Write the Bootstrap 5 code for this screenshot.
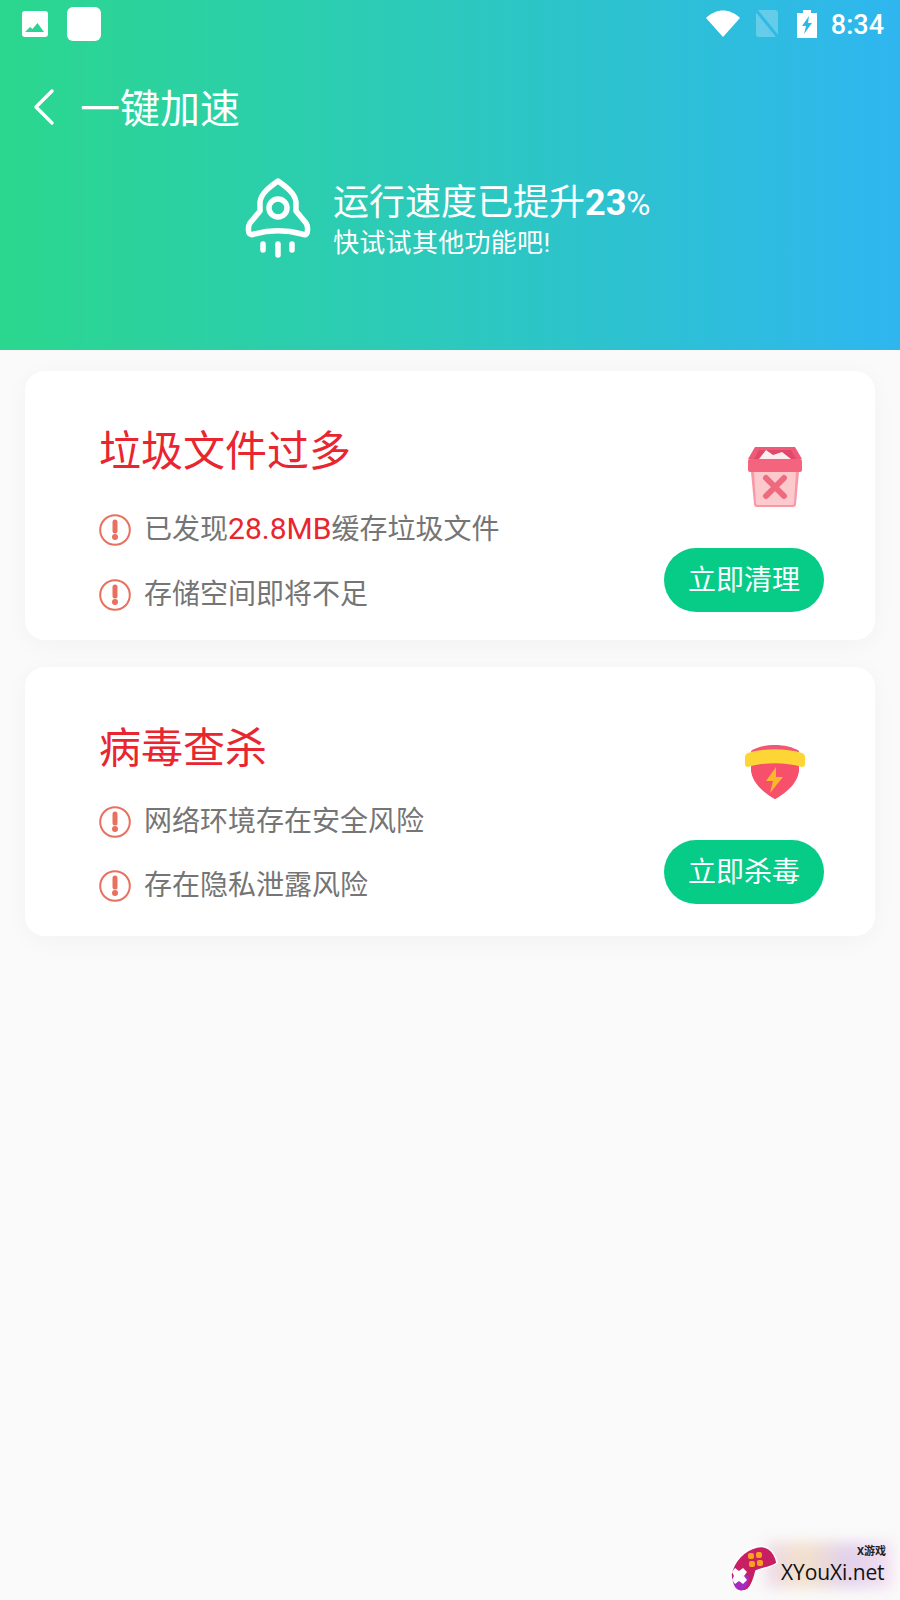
<!DOCTYPE html>
<html lang="zh-CN">
  <head>
    <meta charset="UTF-8" />
    <meta name="viewport" content="width=device-width, initial-scale=1.0" />
    <title>一键加速</title>
    <link rel="stylesheet" href="https://cdn.jsdelivr.net/npm/bootstrap@5.3.0/dist/css/bootstrap.min.css" />
    <style>
      body {
        background-color: #fafafa;
        font-family: Roboto, "Noto Sans CJK SC", sans-serif;
        min-height: 1600px;
        position: relative;
        overflow: hidden;
      }
      .top-area {
        height: 350px;
        background: linear-gradient(90deg, #2bd78e 0%, #2cc9bd 50%, #2fb6f0 100%);
        color: #fff;
      }
      .status-row {
        height: 50px;
        padding: 7px 16px 0 22px;
      }
      .status-image { margin-top: 4px; }
      .status-blank { width: 34px; height: 34px; margin-left: 19px; }
      .status-wifi { margin-top: 3px; }
      .status-sim { margin: 3px 0 0 16px; }
      .status-batt { margin: 3px 0 0 19px; }
      .status-time {
        font-size: 27px;
        font-weight: 500;
        line-height: 36px;
        margin-left: 14px;
      }
      .title-row {
        padding: 30px 0 0 32px;
        height: 110px;
      }
      .title-text {
        font-size: 40px;
        line-height: 60px;
        margin-left: 24px;
      }
      .speed-row {
        margin-top: 17px;
        padding-left: 245px;
      }
      .speed-icon { margin-right: 22px; }
      .speed-text { margin-top: 3px; }
      .speed-main {
        font-size: 36px;
        line-height: 46px;
      }
      .speed-main b { font-weight: 700; }
      .speed-pct { font-size: 33px; }
      .speed-sub {
        font-size: 26px;
        line-height: 32px;
        letter-spacing: 0.3px;
      }
      .cards-area {
        padding: 21px 25px 0;
      }
      .task-card {
        height: 269px;
        margin-bottom: 27px;
        background: #fff;
        border-radius: 20px;
        box-shadow: 0 4px 24px rgba(0, 0, 0, 0.035);
        padding-left: 74px;
        position: relative;
      }
      .task-title {
        color: #e9252f;
        font-size: 42px;
        line-height: 60px;
        margin: 0;
        font-weight: 400;
      }
      .task-line {
        color: #757575;
        font-size: 28px;
        line-height: 40px;
      }
      .task-line em {
        color: #e9252f;
        font-style: normal;
        font-size: 30px;
      }
      .warn-mark {
        margin-right: 13px;
        flex: none;
      }
      .task-body-a { padding-top: 51px; }
      .task-body-a .task-first { margin-top: 27px; }
      .task-body-a .task-gap { margin-top: 25px; }
      .task-body-b { padding-top: 52px; }
      .task-body-b .task-first { margin-top: 23px; }
      .task-body-b .task-gap { margin-top: 24px; }
      .action-col {
        width: 160px;
        margin-right: 51px;
      }
      .bin-pic { margin: 76px 22px 41px 0; }
      .shield-pic { margin: 77px 19px 41px 0; }
      .btn-go {
        background-color: #06cc88;
        border: none;
        color: #fff;
        font-size: 28px;
        line-height: 40px;
        width: 160px;
        height: 64px;
        border-radius: 32px;
        padding: 1px 0 0;
      }
      .btn-go:hover {
        background-color: #06cc88;
        color: #fff;
      }
      .site-mark {
        position: absolute;
        right: 0;
        bottom: 0;
        width: 172px;
        height: 70px;
      }
      .site-smear {
        position: absolute;
        left: 38px;
        right: 8px;
        top: 12px;
        height: 46px;
        background: linear-gradient(90deg, #e9cfe6, #f1d9b9 30%, #d9c3e8 65%, #f2d6ee);
        filter: blur(7px);
        opacity: 0.75;
      }
      .site-name {
        position: absolute;
        left: 53px;
        top: 27px;
        font-family: "Open Sans", sans-serif;
        font-size: 21px;
        line-height: 30px;
        font-weight: 400;
        color: #111;
        letter-spacing: -0.1px;
        white-space: nowrap;
      }
      .site-tag {
        position: absolute;
        right: 14px;
        top: 15px;
        font-size: 11px;
        line-height: 14px;
        font-weight: 700;
        color: #222;
      }
      .site-pad {
        position: absolute;
        left: 2px;
        top: 16px;
      }
    </style>
  </head>
  <body>
    <div class="top-area">
      <div class="status-row d-flex align-items-start">
        <svg width="26" height="26" viewBox="0 0 26 26" class="status-image">
          <rect width="26" height="26" rx="3" fill="#fff" />
          <path d="M3 21l5-5 2.5 2 5-6 6.500 9z" fill="#2cd494" />
        </svg>
        <div class="bg-white rounded-2 status-blank"></div>
        <div class="ms-auto d-flex align-items-start">
          <svg width="34" height="27" viewBox="0 0 34 27" class="status-wifi">
            <path d="M0 8C10-2 24-2 34 8L17 27z" fill="#fff" />
          </svg>
          <svg width="22" height="27" viewBox="0 0 22 27" class="status-sim">
            <path d="M3 0h16a3 3 0 0 1 3 3v21a3 3 0 0 1-3 3H3a3 3 0 0 1-3-3V3a3 3 0 0 1 3-3z" fill="#fff" opacity=".26" />
            <path d="M0 0l22 27" stroke="#2fb9e6" stroke-width="3" />
          </svg>
          <svg width="20" height="28" viewBox="0 0 20 28" class="status-batt">
            <path d="M6 0h8v3h6v25H0V3h6z" fill="#fff" />
            <path d="M12 6L5 16h4l-2 8 8-11h-4z" fill="#2eb8e8" />
          </svg>
          <span class="status-time">8:34</span>
        </div>
      </div>
      <div class="title-row d-flex align-items-start">
        <svg width="24" height="38" viewBox="0 0 24 38" class="mt-2">
          <path d="M20 3L4 19l16 16" fill="none" stroke="#fff" stroke-width="3.4" stroke-linecap="round" stroke-linejoin="round" />
        </svg>
        <span class="title-text">一键加速</span>
      </div>
      <div class="speed-row d-flex align-items-start">
        <svg width="66" height="82" viewBox="0 0 66 82" class="speed-icon flex-shrink-0">
          <path d="M33 4C26 9 16 16 15 25v9L5 46c-2 3-2 6-1 10 1 2 3 2 5 1 15-4 33-4 48 0 2 1 4 1 5-1 1-4 1-7-1-10L51 34v-9C50 16 40 9 33 4z" fill="none" stroke="#fff" stroke-width="5.500" stroke-linejoin="round" />
          <circle cx="33" cy="31" r="9" fill="none" stroke="#fff" stroke-width="5.500" />
          <path d="M18 67v6M33 67v11M47 67v6" stroke="#fff" stroke-width="5.500" stroke-linecap="round" />
        </svg>
        <div class="speed-text">
          <div class="speed-main">运行速度已提升<b>23</b><span class="speed-pct">%</span></div>
          <div class="speed-sub">快试试其他功能吧!</div>
        </div>
      </div>
    </div>

    <div class="cards-area">
      <div class="task-card d-flex">
        <div class="flex-grow-1 task-body-a">
          <h2 class="task-title">垃圾文件过多</h2>
          <div class="task-line d-flex align-items-center task-first">
            <svg class="warn-mark" width="32" height="32" viewBox="0 0 32 32"><use href="#warn" /></svg>
            <span>已发现<em>28.8MB</em>缓存垃圾文件</span>
          </div>
          <div class="task-line d-flex align-items-center task-gap">
            <svg class="warn-mark" width="32" height="32" viewBox="0 0 32 32"><use href="#warn" /></svg>
            <span>存储空间即将不足</span>
          </div>
        </div>
        <div class="action-col d-flex flex-column">
          <svg width="54" height="60" viewBox="0 0 54 60" class="bin-pic align-self-end">
            <path d="M7 0h40l7 12H0z" fill="#ef5a78" />
            <path d="M11 3h32l5 9H6z" fill="#e2486a" />
            <path d="M11 12l7-9 7 5 9-3 9 7z" fill="#fbeeee" />
            <rect y="12" width="54" height="13" rx="2" fill="#f4647f" />
            <path d="M3 25h48l-3 32q0 3-3 3H9q-3 0-3-3z" fill="#fa98a6" />
            <path d="M6 25h42l-2 31q0 2-3 2H11q-3 0-3-2z" fill="#fcc9cd" />
            <path d="M18 31l18 18M36 31L18 49" stroke="#ee6a7c" stroke-width="6" stroke-linecap="round" />
          </svg>
          <button class="btn btn-go" type="button">立即清理</button>
        </div>
      </div>

      <div class="task-card d-flex">
        <div class="flex-grow-1 task-body-b">
          <h2 class="task-title">病毒查杀</h2>
          <div class="task-line d-flex align-items-center task-first">
            <svg class="warn-mark" width="32" height="32" viewBox="0 0 32 32"><use href="#warn" /></svg>
            <span>网络环境存在安全风险</span>
          </div>
          <div class="task-line d-flex align-items-center task-gap">
            <svg class="warn-mark" width="32" height="32" viewBox="0 0 32 32"><use href="#warn" /></svg>
            <span>存在隐私泄露风险</span>
          </div>
        </div>
        <div class="action-col d-flex flex-column">
          <svg width="60" height="55" viewBox="0 0 60 55" class="shield-pic align-self-end">
            <path d="M6 7C18-1 42-1 54 7v17C54 38 42 48 30 55 18 48 6 38 6 24z" fill="#f25576" />
            <path d="M6 20h48v4C54 38 42 48 30 55 18 48 6 38 6 24z" fill="#f6506a" />
            <path d="M3 9c17-5 37-5 54 0 2 1 3 2 3 4v7c0 2-1 3-3 3-17-5-37-5-54 0-2 0-3-1-3-3v-7c0-2 1-3 3-4z" fill="#fdd534" />
            <path d="M31 23L21 37h7l-3 12 13-16h-7z" fill="#fab62f" />
          </svg>
          <button class="btn btn-go" type="button">立即杀毒</button>
        </div>
      </div>
    </div>

    <svg width="0" height="0" class="d-block">
      <symbol id="warn" viewBox="0 0 32 32">
        <circle cx="16" cy="16" r="14.800" fill="none" stroke="#e8705f" stroke-width="2" />
        <path d="M16 8v9" stroke="#e8705f" stroke-width="5" stroke-linecap="round" />
        <circle cx="16" cy="23" r="3" fill="#e8705f" />
      </symbol>
    </svg>

    <div class="site-mark">
      <div class="site-smear"></div>
      <svg class="site-pad" width="50" height="48" viewBox="0 0 50 48">
        <path d="M1 28C4 15 14 4 27 1c8-2 17 2 20 16-7 5-15 5-21 8-2 8-4 15-8 18-6 4-12 2-14-4C2 36 1 32 1 28z" fill="#c81e62" stroke="#fff" stroke-width="1.500" />
        <path d="M2 30c6-2 12-2 17 0 0 5-2 10-4 13-4 3-9 1-11-4-1-3-2-6-2-9z" fill="#a62ac0" />
        <path d="M5 22l4 3 4-3 4 4-3 4 3 4-4 4-4-3-4 3-3-4 2-4-2-4z" fill="#fff" />
        <g fill="#f6a21d"><rect x="18" y="7" width="6" height="6" rx="2" /><rect x="26" y="6" width="6" height="6" rx="2" /><rect x="19" y="15" width="6" height="6" rx="2" /><rect x="27" y="14" width="6" height="6" rx="2" /></g>
      </svg>
      <span class="site-tag">X游戏</span>
      <span class="site-name">XYouXi.net</span>
    </div>

    <script src="https://cdn.jsdelivr.net/npm/bootstrap@5.3.0/dist/js/bootstrap.bundle.min.js"></script>
  </body>
</html>
